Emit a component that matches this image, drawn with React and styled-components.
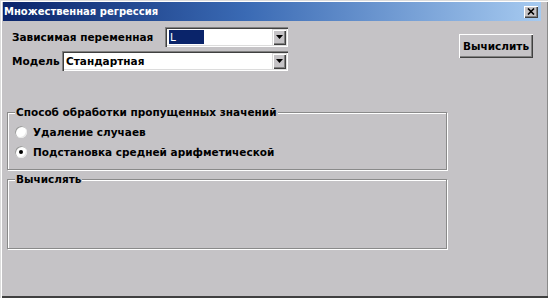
import React from "react";
import styled, { createGlobalStyle } from "styled-components";

const Global = createGlobalStyle`
  html, body {
    margin: 0;
    padding: 0;
    background: #c5c3c6;
  }
  * {
    box-sizing: border-box;
  }
`;

const face = "#c5c3c6";
const font = `"DejaVu Sans", "Liberation Sans", sans-serif`;

const Window = styled.div`
  width: 548px;
  height: 298px;
  background: ${face};
  padding: 2px 7px 0 3px;
  display: flex;
  flex-direction: column;
  font-family: ${font};
  font-size: 10.5px;
  font-weight: bold;
  color: #000;
  box-shadow: inset 1px 1px 0 #dcdcdc, inset 2px 2px 0 #fff,
    inset 0 -2px 0 #404040, inset -1px 0 0 #8a8a8a;
`;

const TitleBar = styled.div`
  height: 19px;
  display: flex;
  align-items: center;
  justify-content: space-between;
  padding: 0 3px 0 1px;
  background: linear-gradient(to right, #0a246a 0%, #3a6ab4 45%, #a6caf0 100%);
  color: #fff;
  font-size: 10px;
`;

const CloseButton = styled.div`
  width: 14px;
  height: 12px;
  background: ${face};
  display: flex;
  align-items: center;
  justify-content: center;
  box-shadow: inset 1px 1px 0 #fff, inset -1px -1px 0 #404040,
    inset -2px -2px 0 #808080;
`;

const Body = styled.div`
  flex: 1;
  display: flex;
  flex-direction: column;
  padding: 6px 8px 0 4px;
`;

const Top = styled.div`
  display: flex;
  justify-content: space-between;
  align-items: flex-start;
`;

const Fields = styled.div`
  width: 281px;
  display: flex;
  flex-direction: column;
  gap: 4px;
`;

const Row = styled.div`
  display: flex;
  align-items: center;
  justify-content: space-between;
  padding-left: 5px;
`;

const Combo = styled.div`
  width: ${(p) => p.$w}px;
  height: 20px;
  background: #fff;
  display: flex;
  align-items: center;
  padding: 2px;
  box-shadow: inset 1px 1px 0 #808080, inset 2px 2px 0 #404040,
    inset -1px -1px 0 #fff, inset -2px -2px 0 #dcdcdc;
`;

const ComboText = styled.span`
  flex: 1;
  padding-left: 2px;
  line-height: 14px;
`;

const Selected = styled.span`
  display: inline-block;
  width: 35px;
  height: 14px;
  line-height: 14px;
  padding-left: 1px;
  background: #0a246a;
  color: #fff;
  font-weight: normal;
`;

const DropButton = styled.div`
  width: 14px;
  height: 16px;
  background: ${face};
  display: flex;
  align-items: center;
  justify-content: center;
  box-shadow: inset 1px 1px 0 #dcdcdc, inset 2px 2px 0 #fff,
    inset -1px -1px 0 #404040, inset -2px -2px 0 #808080;
`;

const Button = styled.button`
  margin-top: 7px;
  width: 74px;
  height: 24px;
  border: none;
  background: ${face};
  font-family: ${font};
  font-size: 10.5px;
  font-weight: bold;
  color: #000;
  padding: 0;
  box-shadow: inset 1px 1px 0 #fff, inset -1px -1px 0 #404040,
    inset -2px -2px 0 #808080;
`;

const Group = styled.div`
  position: relative;
  margin-top: ${(p) => p.$top}px;
  width: 440px;
  height: ${(p) => p.$h}px;
  border: 1px solid #8a8a8a;
  box-shadow: inset 1px 1px 0 #fff, 1px 1px 0 #fff;
  padding: 12px 0 0 7px;
  display: flex;
  flex-direction: column;
  gap: 7px;
`;

const Legend = styled.span`
  position: absolute;
  top: -7px;
  left: 7px;
  background: ${face};
  padding: 0 1px;
  line-height: 13px;
`;

const Radio = styled.label`
  display: flex;
  align-items: center;
  gap: 6px;
  height: 13px;
`;

const RadioDot = styled.span`
  width: 12px;
  height: 12px;
  border-radius: 50%;
  background: #fff;
  display: flex;
  align-items: center;
  justify-content: center;
  box-shadow: inset 1px 1px 0 #9a9a9a, inset -1px -1px 0 #e8e8e8;
  &::after {
    content: "";
    width: 4px;
    height: 4px;
    border-radius: 50%;
    background: ${(p) => (p.$on ? "#000" : "transparent")};
  }
`;

const Arrow = () => (
  <svg width="7" height="4" viewBox="0 0 7 4">
    <path d="M0 0h7L3.5 4z" fill="#000" />
  </svg>
);

export default function App() {
  return (
    <>
      <Global />
      <Window>
        <TitleBar>
          <span>Множественная регрессия</span>
          <CloseButton>
            <svg width="8" height="7" viewBox="0 0 8 7">
              <path d="M1 0.5l6 6M7 0.5l-6 6" stroke="#000" strokeWidth="1.6" />
            </svg>
          </CloseButton>
        </TitleBar>
        <Body>
          <Top>
            <Fields>
              <Row>
                <span>Зависимая переменная</span>
                <Combo $w={123}>
                  <ComboText>
                    <Selected>L</Selected>
                  </ComboText>
                  <DropButton>
                    <Arrow />
                  </DropButton>
                </Combo>
              </Row>
              <Row>
                <span>Модель</span>
                <Combo $w={226}>
                  <ComboText>Стандартная</ComboText>
                  <DropButton>
                    <Arrow />
                  </DropButton>
                </Combo>
              </Row>
            </Fields>
            <Button>Вычислить</Button>
          </Top>
          <Group $top={41} $h={58}>
            <Legend>Способ обработки пропущенных значений</Legend>
            <Radio>
              <RadioDot />
              <span>Удаление случаев</span>
            </Radio>
            <Radio>
              <RadioDot $on />
              <span>Подстановка средней арифметической</span>
            </Radio>
          </Group>
          <Group $top={9} $h={70}>
            <Legend>Вычислять</Legend>
          </Group>
        </Body>
      </Window>
    </>
  );
}
